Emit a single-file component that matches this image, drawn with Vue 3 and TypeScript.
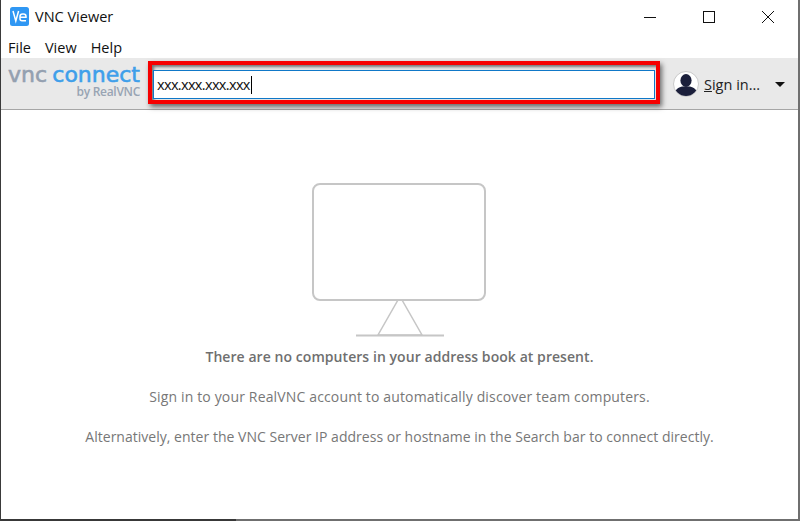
<script setup lang="ts">
const menus: string[] = ['File', 'View', 'Help']
</script>

<template>
  <div class="window">
    <header class="titlebar">
      <svg class="app-icon" width="19" height="19" viewBox="0 0 19 19">
        <rect width="19" height="19" rx="2.500" fill="#2f97f3" />
        <path d="M3 4 5.800 14 8.600 4" fill="none" stroke="#fff" stroke-width="1.500" />
        <path d="M16 13.800h-4a2 2 0 0 1-2-2V9.500a2.500 2.500 0 0 1 2.500-2.500h1A2.500 2.500 0 0 1 16 9.500v.8h-6" fill="none" stroke="#fff" stroke-width="1.500" />
      </svg>
      <span class="title">VNC Viewer</span>
      <div class="controls">
        <svg width="14" height="14" viewBox="0 0 14 14"><path d="M1 7.500h12" stroke="#111" fill="none" /></svg>
        <svg width="14" height="14" viewBox="0 0 14 14"><rect x="1.500" y="1.500" width="11" height="11" stroke="#111" fill="none" /></svg>
        <svg width="14" height="14" viewBox="0 0 14 14"><path d="M1 1l12 12M13 1 1 13" stroke="#111" fill="none" /></svg>
      </div>
    </header>
    <nav class="menubar">
      <span v-for="menu in menus" :key="menu">{{ menu }}</span>
    </nav>
    <div class="toolbar">
      <div class="logo">
        <div class="logo-main"><span class="vnc">vnc</span><span class="connect">connect</span></div>
        <div class="logo-sub">by RealVNC</div>
      </div>
      <div class="highlight">
        <div class="search"><span>xxx.xxx.xxx.xxx</span><i class="caret"></i></div>
      </div>
      <div class="account">
        <svg width="26" height="26" viewBox="0 0 26 26">
          <defs><clipPath id="avatar"><circle cx="13" cy="13" r="12" /></clipPath></defs>
          <circle cx="13" cy="13" r="12.500" fill="#fff" stroke="#c9c9c9" />
          <g clip-path="url(#avatar)" fill="#1b1f3b">
            <ellipse cx="13" cy="9.500" rx="5.600" ry="6.400" />
            <path d="M1 26c0-7 4-9.500 8-10.500h8c4 1 8 3.500 8 10.500z" />
          </g>
        </svg>
        <span class="signin"><u>S</u>ign in...</span>
        <i class="arrow"></i>
      </div>
    </div>
    <main class="content">
      <svg class="monitor" width="176" height="154" viewBox="0 0 176 154">
        <rect x="1" y="1" width="172" height="116" rx="7" fill="none" stroke="#c6c6c6" stroke-width="2" />
        <path d="M86 117h4l20 35H66z" fill="none" stroke="#c6c6c6" stroke-width="1.500" />
        <path d="M44 152.500h88" stroke="#c6c6c6" stroke-width="2" fill="none" />
      </svg>
      <p class="headline">There are no computers in your address book at present.</p>
      <p class="line first">Sign in to your RealVNC account to automatically discover team computers.</p>
      <p class="line second">Alternatively, enter the VNC Server IP address or hostname in the Search bar to connect directly.</p>
    </main>
    <div class="bottom-edge"></div>
  </div>
</template>

<style>
html, body { margin: 0; background: #fff; }
</style>

<style scoped>
.window {
  box-sizing: border-box;
  width: 800px;
  height: 521px;
  overflow: hidden;
  background: #fff;
  border-left: 1px solid #3a3a3a;
  border-right: 2px solid #6f6f6f;
  font-family: "Open Sans", "Noto Sans", sans-serif;
  display: flex;
  flex-direction: column;
}
.titlebar {
  height: 33px;
  display: flex;
  align-items: center;
  padding-left: 9px;
  flex: none;
}
.app-icon { flex: none; }
.title {
  margin-left: 6px;
  font: 14.500px "Open Sans", sans-serif;
  color: #111;
}
.controls {
  margin-left: auto;
  display: flex;
  gap: 45px;
  padding-right: 23px;
}
.menubar {
  box-sizing: border-box;
  height: 25px;
  flex: none;
  display: flex;
  gap: 14px;
  align-items: center;
  padding: 3px 0 0 7px;
  font-size: 14.500px;
  color: #111;
}
.toolbar {
  height: 52px;
  flex: none;
  box-sizing: border-box;
  background: #e9e9e9;
  border-bottom: 1px solid #a6a6a6;
  display: flex;
  align-items: center;
}
.logo {
  width: 132px;
  flex: none;
  margin-left: 7px;
  text-align: right;
  margin-top: -2px;
}
.logo-main {
  font: 400 22px/18px "DejaVu Sans", sans-serif;
  white-space: nowrap;
  -webkit-text-stroke: 0.600px currentColor;
  display: flex;
  justify-content: space-between;
}
.vnc { color: #94a0b0; }
.connect { color: #3f9fea; }
.logo-sub {
  font: 600 12px/16px "Open Sans", sans-serif;
  letter-spacing: -0.300px;
  color: #98a4b3;
}
.highlight {
  align-self: flex-start;
  margin: 3px 0 0 8px;
  width: 512px;
  height: 43px;
  box-sizing: border-box;
  border: 4px solid #f60000;
  padding: 5px 1px 1px;
  background: #e9e9e9;
  box-shadow: 2px 3px 5px rgba(0, 0, 0, 0.55), inset 2px 2px 3px rgba(0, 0, 0, 0.5);
  flex: none;
}
.search {
  height: 100%;
  box-sizing: border-box;
  border: 1px solid #0f78c8;
  background: #fff;
  display: flex;
  align-items: center;
  padding-left: 3px;
  font-size: 14.500px;
  letter-spacing: -0.650px;
  color: #111;
}
.caret {
  margin-left: 1px;
  width: 1px;
  height: 18px;
  background: #000;
  display: block;
}
.account {
  margin-left: 13px;
  display: flex;
  align-items: center;
}
.signin {
  margin-left: 5px;
  padding-top: 1px;
  font-size: 14.500px;
  color: #222;
}
.arrow {
  margin-left: 15px;
  margin-top: 1px;
  width: 0;
  height: 0;
  border-left: 5px solid transparent;
  border-right: 5px solid transparent;
  border-top: 5px solid #111;
}
.content {
  flex: 1;
  display: flex;
  flex-direction: column;
  align-items: center;
  padding-top: 73px;
  color: #777;
  font-size: 14px;
}
.monitor { flex: none; display: block; }
p { margin: 0; line-height: 20px; white-space: nowrap; }
.headline { margin-top: 10px; font-weight: 600; letter-spacing: 0.060px; color: #6f6f6f; }
.line { margin-top: 20px; }
.first { letter-spacing: 0.150px; }
.second { letter-spacing: 0.020px; }
.bottom-edge {
  height: 2px;
  flex: none;
  background: linear-gradient(to right, #383838 235px, #6f6f6f 235px);
}
</style>
